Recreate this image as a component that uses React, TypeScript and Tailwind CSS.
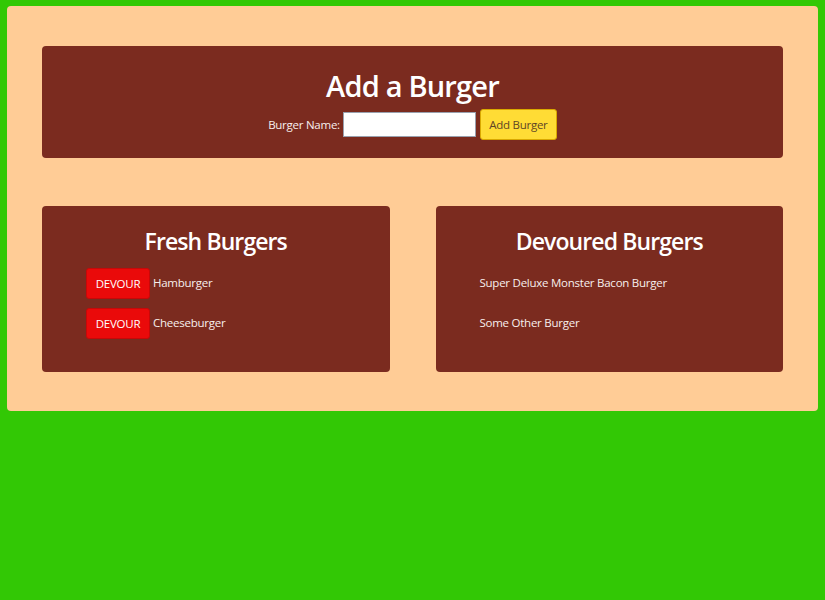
const FRESH = ['Hamburger', 'Cheeseburger']
const DEVOURED = ['Super Deluxe Monster Bacon Burger', 'Some Other Burger']

export default function App() {
  return (
    <div className="min-h-[600px] bg-[#32c805] px-[7px] pt-[6px] font-['Open_Sans',sans-serif] text-white">
      <div className="rounded-[4px] bg-[#ffcc96] px-[35px] pt-[40px] pb-[39px]">
        <section className="flex h-[112px] flex-col items-center rounded-[4px] bg-[#7b2b1f] pt-[20px]">
          <h1 className="text-[29px] font-semibold leading-[40px] tracking-[-0.8px]">Add a Burger</h1>
          <form className="mt-[3px] flex items-center gap-[3px] text-[11.5px] tracking-[-0.25px] text-[#f7efed]" onSubmit={(e) => e.preventDefault()}>
            <label htmlFor="burger">Burger Name:</label>
            <input id="burger" className="h-[25px] w-[133px] border border-gray-400 bg-white" />
            <button className="ml-[1px] h-[31px] w-[77px] rounded-[3px] border border-[#d9a800] bg-[#ffdc35] text-[11.5px] text-[#5e4526]">Add Burger</button>
          </form>
        </section>

        <div className="mt-[48px] grid grid-cols-2 gap-[46px]">
          <section className="h-[166px] rounded-[4px] bg-[#7b2b1f] pt-[20px]">
            <h2 className="text-center text-[23px] font-semibold leading-[30px] tracking-[-0.9px]">Fresh Burgers</h2>
            <ul className="mt-[12px] flex flex-col gap-[9px] pl-[44px]">
              {FRESH.map((b) => (
                <li key={b} className="flex items-center gap-[3px] text-[11.5px] tracking-[-0.25px] text-[#f7efed]">
                  <button className="h-[31px] w-[64px] rounded-[3px] border border-[#c80808] bg-[#ea0a0a] text-[11.5px] text-white">DEVOUR</button>
                  <span className="-mt-[2px]">{b}</span>
                </li>
              ))}
            </ul>
          </section>
          <section className="h-[166px] rounded-[4px] bg-[#7b2b1f] pt-[20px]">
            <h2 className="text-center text-[23px] font-semibold leading-[30px] tracking-[-0.9px]">Devoured Burgers</h2>
            <ul className="mt-[12px] flex flex-col gap-[9px] pl-[44px]">
              {DEVOURED.map((b) => (
                <li key={b} className="flex h-[31px] items-center text-[11.5px] tracking-[-0.25px] text-[#f7efed]">
                  <span className="-mt-[2px]">{b}</span>
                </li>
              ))}
            </ul>
          </section>
        </div>
      </div>
    </div>
  )
}
